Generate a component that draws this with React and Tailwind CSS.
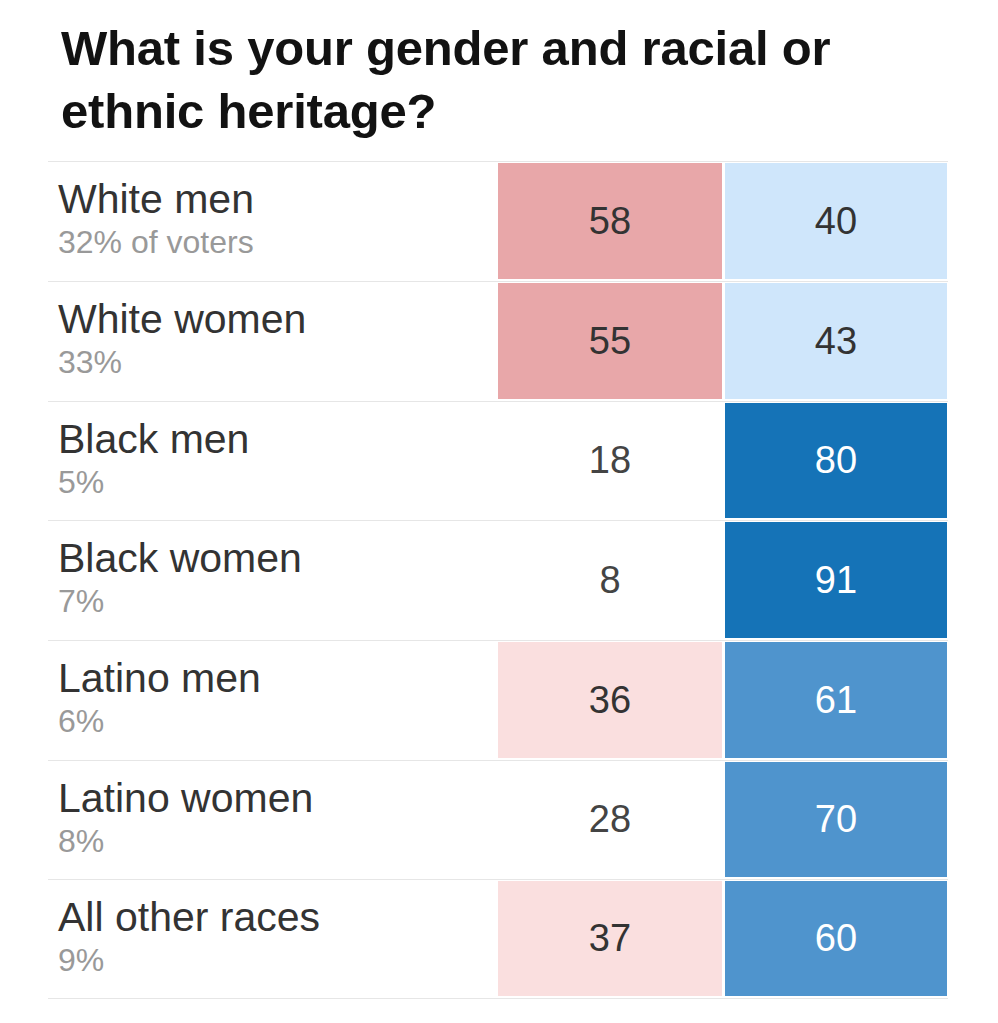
const rows = [
  { label: "White men", share: "32% of voters", r: 58, d: 40, h: "h-[120px]", rc: "bg-[#e8a7a9] text-[#333]", dc: "bg-[#cfe6fb] text-[#333]" },
  { label: "White women", share: "33%", r: 55, d: 43, h: "h-[120px]", rc: "bg-[#e8a7a9] text-[#333]", dc: "bg-[#cfe6fb] text-[#333]" },
  { label: "Black men", share: "5%", r: 18, d: 80, h: "h-[119px]", rc: "bg-white text-[#444]", dc: "bg-[#1573b7] text-white" },
  { label: "Black women", share: "7%", r: 8, d: 91, h: "h-[120px]", rc: "bg-white text-[#444]", dc: "bg-[#1573b7] text-white" },
  { label: "Latino men", share: "6%", r: 36, d: 61, h: "h-[120px]", rc: "bg-[#fadfdf] text-[#333]", dc: "bg-[#4f94cd] text-white" },
  { label: "Latino women", share: "8%", r: 28, d: 70, h: "h-[119px]", rc: "bg-white text-[#444]", dc: "bg-[#4f94cd] text-white" },
  { label: "All other races", share: "9%", r: 37, d: 60, h: "h-[119px]", rc: "bg-[#fadfdf] text-[#333]", dc: "bg-[#4f94cd] text-white" },
];

export default function App() {
  return (
    <div className="min-h-screen bg-white font-['Liberation_Sans',Arial,sans-serif]">
      <div className="ml-[48px] w-[900px]">
        <h1 className="pl-[13px] pt-[17px] mb-[18px] text-[49px] leading-[63px] font-bold tracking-[-0.2px] text-[#121212]">
          What is your gender and racial or
          <br />
          ethnic heritage?
        </h1>

        <div className="border-b border-[#e6e6e6]">
          {rows.map((row) => (
            <div key={row.label} className={`grid grid-cols-[450px_224px_226px] border-t border-[#e6e6e6] ${row.h}`}>
              <div className="pl-[10px] pt-[15px]">
                <div className="text-[41px] leading-[44px] text-[#333]">{row.label}</div>
                <div className="mt-px text-[32px] leading-[40px] text-[#999]">{row.share}</div>
              </div>
              <div className={`mt-px mb-[2px] flex items-center justify-center text-[38px] ${row.rc}`}>
                {row.r}
              </div>
              <div className="mt-px mb-[2px] ml-[3px] mr-px flex items-center justify-center text-[38px]">
                <div className={`w-full h-full flex items-center justify-center ${row.dc}`}>{row.d}</div>
              </div>
            </div>
          ))}
        </div>
      </div>
    </div>
  );
}
